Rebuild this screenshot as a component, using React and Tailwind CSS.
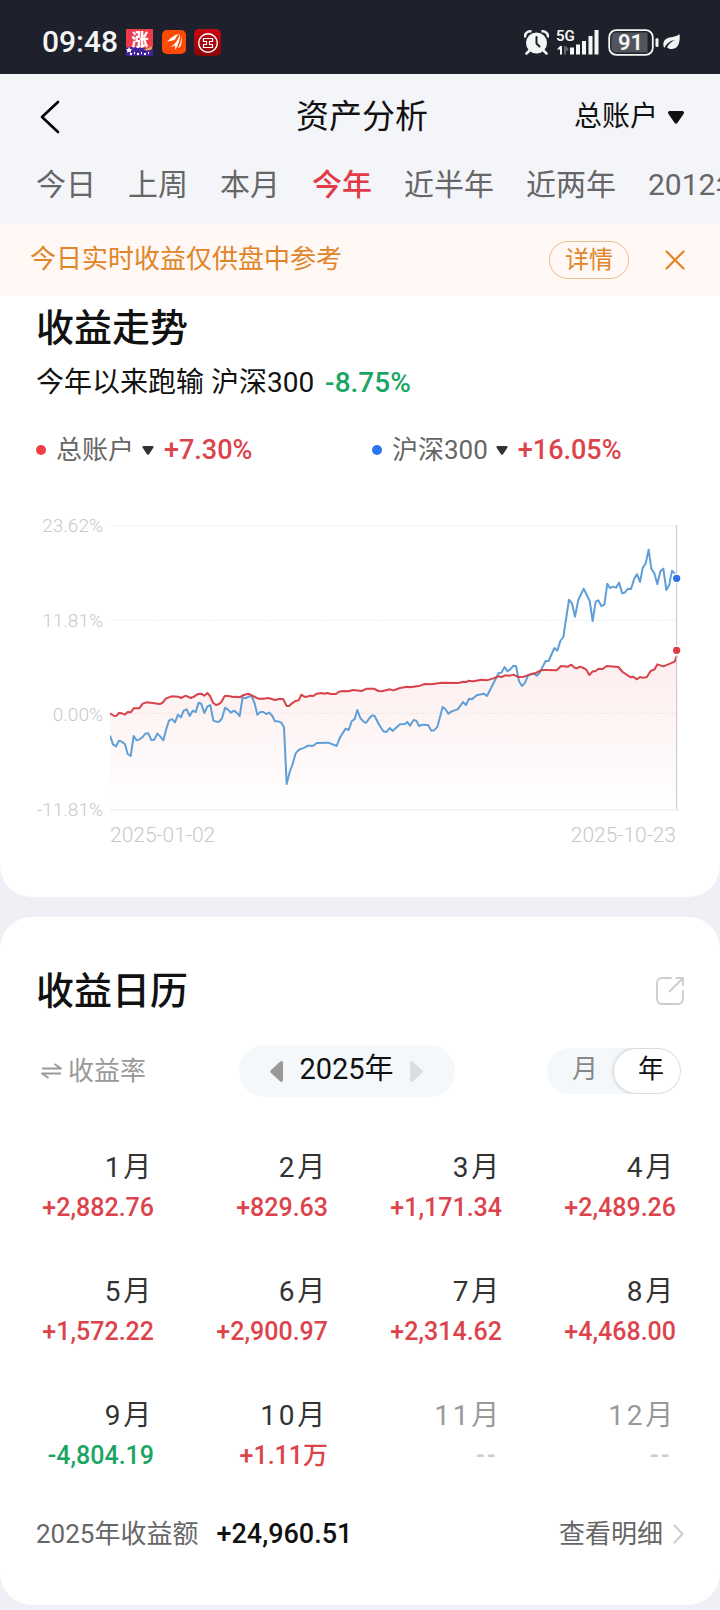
import React, { useState } from "react";
import clsx from "clsx";

const TABS = ["今日", "上周", "本月", "今年", "近半年", "近两年", "2012年"];

const MONTHS = [
  { name: "1月", amount: "+2,882.76" },
  { name: "2月", amount: "+829.63" },
  { name: "3月", amount: "+1,171.34" },
  { name: "4月", amount: "+2,489.26" },
  { name: "5月", amount: "+1,572.22" },
  { name: "6月", amount: "+2,900.97" },
  { name: "7月", amount: "+2,314.62" },
  { name: "8月", amount: "+4,468.00" },
  { name: "9月", amount: "-4,804.19" },
  { name: "10月", amount: "+1.11万" },
  { name: "11月", amount: null },
  { name: "12月", amount: null },
];

// chart units: x 270 - 1970, y 48 (23.62%) - 900 (-11.81%)
const INDEX_LINE =
  "270,677 279,703 288,709 297,692 306,695 315,703 323,732 332,738 341,678 350,691 359,688 368,681 376,671 385,670 394,690 403,689 412,671 421,680 430,691 438,660 447,632 456,627 465,637 474,614 483,622 491,602 500,598 509,618 518,602 527,606 536,578 544,582 553,609 562,590 571,585 580,632 589,635 598,635 606,625 615,593 624,599 633,608 642,602 650,608 659,618 668,562 677,565 686,560 695,558 704,580 712,614 721,606 730,606 739,612 748,608 757,618 765,634 774,634 783,637 792,652 800,822 809,786 818,762 827,730 836,720 845,716 854,713 863,707 880,707 890,699 925,698 950,708 960,682 977,656 986,660 995,634 1004,627 1012,600 1021,624 1030,634 1038,639 1050,622 1058,616 1064,618 1076,642 1090,664 1100,666 1109,654 1118,663 1140,643 1155,642 1162,636 1170,647 1181,630 1189,632 1197,648 1208,644 1224,645 1234,662 1242,661 1252,651 1268,591 1276,597 1285,611 1295,604 1313,598 1329,576 1338,585 1347,566 1356,568 1370,556 1392,551 1401,558 1436,489 1444,488 1454,471 1462,484 1470,479 1480,468 1488,468 1497,514 1506,528 1514,520 1524,497 1534,493 1542,491 1550,497 1558,490 1568,470 1577,453 1586,453 1603,414 1612,422 1621,393 1630,381 1647,269 1656,280 1665,320 1675,270 1691,236 1709,273 1718,333 1727,275 1735,271 1744,288 1753,284 1762,221 1770,234 1779,230 1788,233 1797,218 1807,250 1815,247 1824,236 1833,237 1842,208 1851,192 1860,216 1868,174 1877,160 1886,119 1894,176 1903,190 1912,223 1921,184 1930,176 1939,240 1948,224 1956,182 1971,198";

const ACCOUNT_LINE =
  "270,610 283,618 290,617 297,609 306,610 315,614 323,606 332,607 341,595 358,595 368,581 380,577 420,582 428,578 438,565 455,559 475,560 483,564 497,557 512,564 522,560 532,553 543,551 553,557 562,549 570,558 579,578 588,585 597,582 604,576 614,558 625,558 640,561 650,560 660,562 668,556 685,551 695,556 705,561 715,566 730,566 745,564 765,570 780,566 790,568 800,588 807,588 816,580 826,573 836,571 844,554 853,560 862,560 870,557 880,558 890,551 905,549 912,551 922,549 932,552 948,552 957,545 968,543 985,544 1000,540 1025,543 1040,536 1062,536 1075,543 1085,544 1110,538 1120,541 1140,534 1162,530 1170,532 1200,527 1215,522 1230,523 1245,521 1265,518 1315,519 1330,515 1340,516 1345,512 1360,514 1385,509 1400,511 1420,505 1435,499 1445,501 1455,496 1470,497 1480,494 1495,501 1512,500 1530,493 1545,490 1565,480 1580,480 1610,481 1623,468 1644,470 1654,464 1664,473 1670,475 1680,470 1690,474 1698,478 1708,495 1718,484 1726,484 1736,476 1748,477 1760,468 1795,471 1808,486 1832,502 1840,500 1850,508 1860,501 1866,503 1880,502 1892,483 1904,478 1912,463 1930,469 1950,461 1964,455 1970,438";

function Caret({ className }) {
  return (
    <svg viewBox="0 0 16 13" className={className} aria-hidden="true">
      <path d="M2 0h12c1.800 0 2.600 1.600 1.500 3L9.500 11.800a2 2 0 0 1-3 0L.5 3C-.6 1.600.2 0 2 0z" fill="currentColor" />
    </svg>
  );
}

function StatusBar() {
  return (
    <div className="flex h-[74px] items-center justify-between bg-[#1e212b] pl-[42px] pr-10 pt-2.5 text-[#f4f5f5]">
      <div className="flex items-center">
        <span className="text-[30px] font-medium leading-8">09:48</span>
        <svg viewBox="0 0 27 27" className="ml-2 h-[27px] w-[27px]">
          <rect width="27" height="27" fill="#ee3b4b" />
          <path d="M0 19c6-3 20 2 27-1v9H0z" fill="#3f2499" />
          <path d="M18 20c3-1 5-1 8-3v3c-3 2-6 2-8 0z" fill="#f0a04a" />
          <text x="14" y="17" textAnchor="middle" fontSize="17" fontWeight="900" fill="#fff">涨</text>
          <path d="M3 18l1.200 2 2 .4-1.500 1.300.3 2-2-1-2 1 .4-2L0 20.400l2-.4z" fill="#fff" />
          <path d="M4 25h2m2-1h1m2 1h2m2-1h1m2 1h2m2-1h1" stroke="#fff" strokeWidth="2" />
        </svg>
        <svg viewBox="0 0 24 24" className="ml-[9px] h-6 w-6">
          <rect width="24" height="24" rx="5" fill="#ff4a05" />
          <path d="M5 12C8 8 12 5 17 4c-2 1.500-3 3.500-4 5.500-2 1-5 1.500-8 2.500z" fill="#fff" />
          <path d="M9 17c4-3 7-7 9-13 .4 5-2 12-5 16 .2-2 .4-3 0-5-1 1-2.500 1.800-4 2z" fill="#fff" />
          <path d="M15.500 18c2.500-3 4-7 3.500-12 1.500 4 .5 9-1 11z" fill="#fff" />
        </svg>
        <svg viewBox="0 0 27 27" className="ml-2 h-[27px] w-[27px]">
          <defs>
            <linearGradient id="bank" x1="0" y1="0" x2="0" y2="1">
              <stop offset="0" stopColor="#cc0713" />
              <stop offset="1" stopColor="#860509" />
            </linearGradient>
          </defs>
          <rect width="27" height="27" rx="5" fill="url(#bank)" />
          <g fill="none" stroke="#fff">
            <circle cx="14" cy="14" r="9.300" strokeWidth="1.400" />
            <path d="M9.500 9.500h9v3h-3v3h3v3h-9v-3h3v-3h-3z" strokeWidth="1.200" />
          </g>
        </svg>
      </div>
      <div className="flex items-center">
        <svg viewBox="0 0 25 25" className="h-[25px] w-[25px]">
          <circle cx="12.500" cy="13" r="10.500" fill="currentColor" />
          <path d="M1 7.500C.5 3.500 4 .5 7.500 1.500M17.500 1.500C21 .5 24.500 3.500 24 7.500" fill="none" stroke="currentColor" strokeWidth="2.500" />
          <path d="M5.500 20.500l-3 3M19.500 20.500l3 3" stroke="currentColor" strokeWidth="2.500" strokeLinecap="round" />
          <path d="M12.500 7v6.500l3 3" fill="none" stroke="#1e212b" strokeWidth="2" strokeLinecap="round" />
        </svg>
        <svg viewBox="0 0 43 26" className="ml-2 h-[26px] w-[43px] overflow-visible">
          <text x="-1" y="12" fontSize="15" fontWeight="600" fill="currentColor">5G</text>
          <path d="M0 20.500l3-3.500h2v8.500H3v-5z" fill="currentColor" />
          <path d="M7 17v8.500h2v-3l3-2-3-3.500z" fill="#60636b" />
          <path d="M13 18.500h4v7h-4zM19 15.500h4v10h-4zM25 12h4v13.500h-4zM31.500 7h4v18.500h-4zM37.500 1h4v24.500h-4z" fill="currentColor" />
        </svg>
        <svg viewBox="0 0 51 27" className="ml-2 h-[27px] w-[51px]">
          <rect x="1.200" y="1.200" width="43.600" height="24.600" rx="7" fill="none" stroke="currentColor" strokeWidth="1.800" />
          <path d="M8 3.500h31.500v20H8a4.500 4.500 0 0 1-4.500-4.500V8A4.500 4.500 0 0 1 8 3.500z" fill="#53555e" />
          <rect x="47.500" y="9" width="3" height="9" rx="1.500" fill="currentColor" />
          <text x="22.500" y="21" textAnchor="middle" fontSize="22" fontWeight="600" fill="currentColor">91</text>
        </svg>
        <svg viewBox="0 0 17 17" className="ml-1 h-[17px] w-[17px]">
          <path d="M16.500 0c.8 7-.5 15-8 15-2 0-3.300-.6-4.500-1.800C6 10 9 7 12 6 8 6 4 9 1.200 14-.8 10 .5 5.500 5 4c4-1.400 8.500-1 11.500-4z" fill="currentColor" />
        </svg>
      </div>
    </div>
  );
}

function TrendChart() {
  return (
    <div className="mt-12">
      <div className="flex gap-[7px] pl-[31px] pr-9 text-[19px] leading-5 text-[#c8c8c8]">
        <div className="flex w-[72px] shrink-0 flex-col items-end justify-between font-light">
          <span>23.62%</span>
          <span>11.81%</span>
          <span>0.00%</span>
          <span>-11.81%</span>
        </div>
        <svg viewBox="270 18 1722 912" className="min-w-0 flex-1" role="img" aria-label="收益走势">
          <defs>
            <linearGradient id="fill" gradientUnits="userSpaceOnUse" x1="0" y1="440" x2="0" y2="900">
              <stop offset="0" stopColor="#ef4444" stopOpacity="0.09" />
              <stop offset="0.400" stopColor="#ef4444" stopOpacity="0.06" />
              <stop offset="1" stopColor="#ef4444" stopOpacity="0" />
            </linearGradient>
          </defs>
          <path d="M270 48H1970M270 331H1970M270 610H1970" stroke="#e4e4e4" strokeWidth="3" strokeDasharray="3 4" />
          <path d="M270 900H1977" stroke="#f3f3f3" strokeWidth="6" />
          <polygon points={`270,900 ${ACCOUNT_LINE} 1970,900`} fill="url(#fill)" />
          <polyline points={INDEX_LINE} fill="none" stroke="#5f9fd8" strokeWidth="6" strokeLinejoin="round" />
          <polyline points={ACCOUNT_LINE} fill="none" stroke="#d8424a" strokeWidth="6" strokeLinejoin="round" />
          <path d="M1970 45V897" stroke="#c4c4c4" strokeWidth="3" />
          <circle cx="1970" cy="205" r="13" fill="#2f73ea" stroke="#fff" strokeWidth="4" />
          <circle cx="1970" cy="421" r="13" fill="#e23c48" stroke="#fff" strokeWidth="4" />
        </svg>
      </div>
      <div className="flex justify-between pl-[110px] pr-11 text-[21px] font-light leading-[30px] text-[#c8c8c8]">
        <span>2025-01-02</span>
        <span>2025-10-23</span>
      </div>
    </div>
  );
}

function MonthCell({ name, amount }) {
  return (
    <div className="text-right leading-10">
      <div className={clsx("text-[28px] tracking-widest", amount ? "text-[#333]" : "text-[#999]")}>{name}</div>
      {amount ? (
        <div className={clsx("text-[25px] font-medium", amount.startsWith("-") ? "text-[#1ba562]" : "text-[#dc444c]")}>
          {amount}
        </div>
      ) : (
        <div className="pr-1 text-[25px] font-medium tracking-widest text-[#ccc]">--</div>
      )}
    </div>
  );
}

export default function App() {
  const [tab, setTab] = useState("今年");
  const [showNotice, setShowNotice] = useState(true);
  const [unit, setUnit] = useState("年");

  return (
    <div className="min-h-screen overflow-hidden bg-[#eff0f5] pb-[5px] font-['Roboto','Noto_Sans_CJK_SC',sans-serif] text-[#111]">
      <StatusBar />

      <header className="bg-[#f4f5f9]">
        <div className="grid h-[86px] grid-cols-[1fr_auto_1fr] items-center pl-10 pr-9">
          <button type="button" aria-label="返回" className="justify-self-start">
            <svg viewBox="0 0 20 34" className="h-[34px] w-5">
              <path d="M18 2L2 17l16 15" fill="none" stroke="#000" strokeWidth="2.600" strokeLinecap="round" strokeLinejoin="round" />
            </svg>
          </button>
          <h1 className="text-[33px] leading-10">资产分析</h1>
          <button type="button" className="flex items-center gap-2.5 justify-self-end text-[28px] leading-10">
            总账户
            <Caret className="h-[13px] w-4" />
          </button>
        </div>
        <nav className="flex h-16 items-center gap-8 whitespace-nowrap pb-3.5 pl-9 text-[30px] leading-10 text-[#666]">
          {TABS.map((item) => (
            <button
              key={item}
              type="button"
              onClick={() => setTab(item)}
              className={clsx("shrink-0", item === tab && "font-medium text-[#e23c48]")}
            >
              {item}
            </button>
          ))}
        </nav>
      </header>

      {showNotice && (
        <div className="flex h-[72px] items-center bg-[#fff8f4] pl-[30px] pr-[35px] text-[#e0852a]">
          <p className="flex-1 pb-0.5 text-[26px] leading-9">今日实时收益仅供盘中参考</p>
          <button type="button" className="h-[38px] w-20 rounded-full border border-[#ebbd8e] text-2xl leading-8">
            详情
          </button>
          <button type="button" aria-label="关闭" className="ml-9" onClick={() => setShowNotice(false)}>
            <svg viewBox="0 0 20 20" className="h-5 w-5">
              <path d="M1.500 1.500l17 17M18.500 1.500l-17 17" stroke="currentColor" strokeWidth="2.200" strokeLinecap="round" />
            </svg>
          </button>
        </div>
      )}

      <section className="rounded-b-[32px] bg-white pb-[47px]">
        <h2 className="pl-9 pt-0.5 text-[38px] font-medium leading-[60px]">收益走势</h2>
        <p className="pl-9 text-[28px] leading-[50px]">
          今年以来跑输 沪深300 <span className="ml-1 font-medium text-[#1ba562]">-8.75%</span>
        </p>
        <div className="mt-6 grid grid-cols-2 pl-9 pr-3 text-[26px] leading-9 text-[#666]">
          <div className="flex items-center">
            <i className="mr-2.5 h-2.5 w-2.5 rounded-full bg-[#ef3e46]" />
            <button type="button" className="flex items-center gap-2">
              总账户
              <Caret className="h-[9px] w-3 text-[#333]" />
            </button>
            <span className="ml-2.5 text-[27px] font-medium text-[#dc444c]">+7.30%</span>
          </div>
          <div className="flex items-center">
            <i className="mr-2.5 h-2.5 w-2.5 rounded-full bg-[#2a75f6]" />
            <button type="button" className="flex items-center gap-2">
              沪深300
              <Caret className="h-[9px] w-3 text-[#333]" />
            </button>
            <span className="ml-2.5 text-[27px] font-medium text-[#dc444c]">+16.05%</span>
          </div>
        </div>
        <TrendChart />
      </section>

      <section className="mt-5 rounded-[32px] bg-white pb-[53px] pt-11">
        <div className="flex items-center justify-between px-9">
          <h2 className="text-[38px] font-medium leading-[60px]">收益日历</h2>
          <button type="button" aria-label="分享">
            <svg viewBox="0 0 28 28" className="h-7 w-7" fill="none" stroke="#ccc" strokeWidth="1.800">
              <path d="M15 1H6a5 5 0 0 0-5 5v16a5 5 0 0 0 5 5h16a5 5 0 0 0 5-5v-8.500" strokeLinecap="round" />
              <path d="M13.500 14.500L27 1M20.500 1H27v7" strokeLinecap="round" />
            </svg>
          </button>
        </div>

        <div className="mt-6 flex items-center justify-between pl-[41px] pr-[39px]">
          <button type="button" className="flex items-center gap-1.5 text-[26px] leading-9 text-[#999]">
            <svg viewBox="0 0 21 16" className="h-4 w-[21px]" fill="none" stroke="currentColor" strokeWidth="1.800">
              <path d="M1 5.500h19L13.500 1M20 10.500H1L7.500 15" strokeLinejoin="round" />
            </svg>
            收益率
          </button>
          <div className="flex h-[52px] w-[216px] items-center justify-between rounded-full bg-[#f4f8fb] px-[31px]">
            <button type="button" aria-label="上一年">
              <svg viewBox="0 0 13 21" className="h-[21px] w-[13px]">
                <path d="M13 2v17c0 2-1.500 2.500-3 1.200L1 12a2 2 0 0 1 0-3L10 .8C11.500-.5 13 0 13 2z" fill="#999" />
              </svg>
            </button>
            <span className="pb-1 text-[29px] leading-10">2025年</span>
            <button type="button" aria-label="下一年">
              <svg viewBox="0 0 13 21" className="h-[21px] w-[13px]">
                <path d="M0 2v17c0 2 1.500 2.500 3 1.200L12 12a2 2 0 0 0 0-3L3 .8C1.500-.5 0 0 0 2z" fill="#dcdde0" />
              </svg>
            </button>
          </div>
          <div className="flex h-[46px] overflow-hidden rounded-full bg-[#f4f8fb] p-px text-[26px] leading-10">
            {["月", "年"].map((item) => (
              <button
                key={item}
                type="button"
                onClick={() => setUnit(item)}
                className={clsx(
                  "w-[66px] rounded-full pb-1 pl-2",
                  item === unit ? "bg-white text-[#111] shadow-[0_0_4px_rgba(0,0,0,0.25)]" : "text-[#888]"
                )}
              >
                {item}
              </button>
            ))}
          </div>
        </div>

        <div className="mt-[51px] grid grid-cols-4 gap-x-14 gap-y-11 pl-9 pr-11">
          {MONTHS.map((month) => (
            <MonthCell key={month.name} {...month} />
          ))}
        </div>

        <div className="mt-10 flex items-center px-9 text-[26px] leading-9 text-[#666]">
          <span>2025年收益额</span>
          <span className="ml-[18px] flex-1 text-[27px] font-medium text-[#111]">+24,960.51</span>
          <a href="#detail" className="flex items-center gap-2.5">
            查看明细
            <svg viewBox="0 0 11 20" className="h-5 w-[11px]">
              <path d="M1.500 1.500l8 8.500-8 8.500" fill="none" stroke="#ccc" strokeWidth="2" strokeLinecap="round" />
            </svg>
          </a>
        </div>
      </section>
    </div>
  );
}
